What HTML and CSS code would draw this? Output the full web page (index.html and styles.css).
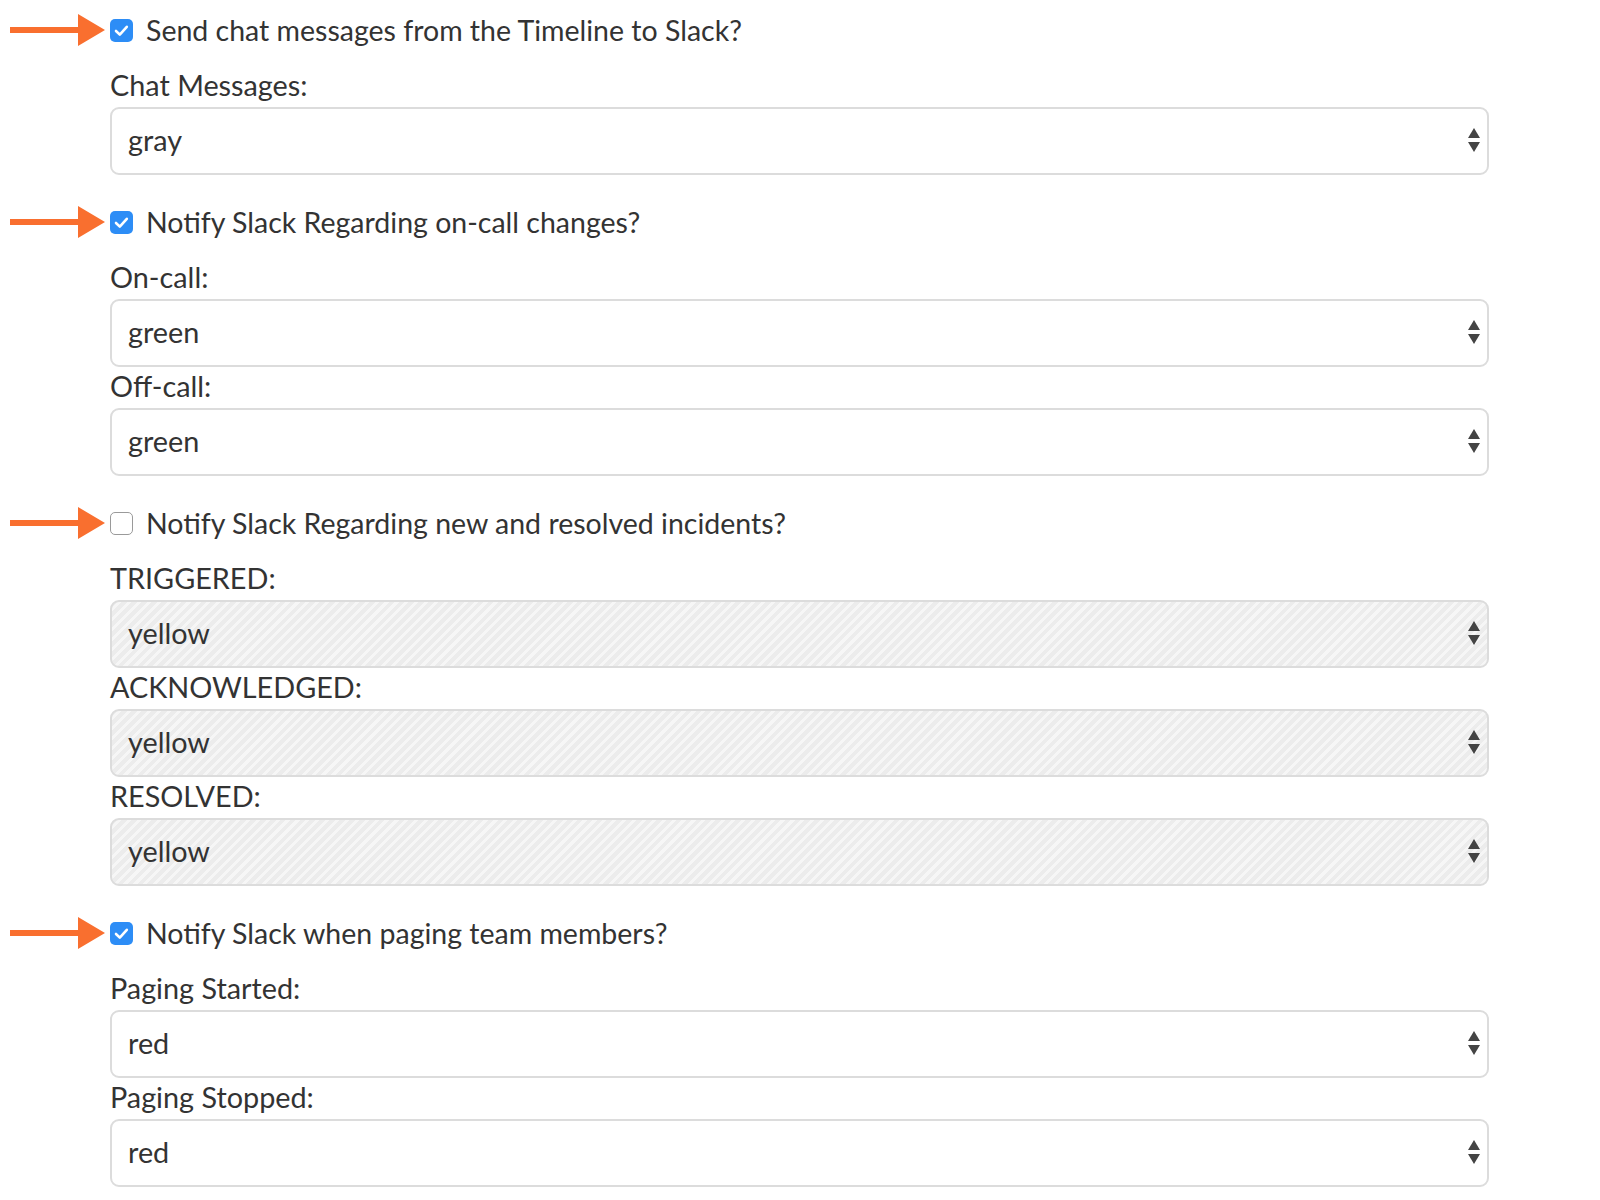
FILE: index.html
```html
<!DOCTYPE html>
<html>
<head>
<meta charset="utf-8">
<link rel="stylesheet" href="styles.css">
</head>
<body>
<div class="page">

  <section class="group">
    <div class="toggle-row">
      <svg class="pointer" width="100" height="40" viewBox="0 0 100 40"><rect x="0" y="17" width="70" height="6" fill="#f96f2f"/><polygon points="68,4 95,20 68,36" fill="#f96f2f"/></svg>
      <span class="box checked"><svg width="23" height="23" viewBox="0 0 23 23"><path d="M6 12 L9.8 15.6 L16.8 7.8" fill="none" stroke="#fff" stroke-width="2.6" stroke-linecap="round" stroke-linejoin="round"/></svg></span>
      <span class="toggle-text">Send chat messages from the Timeline to Slack?</span>
    </div>
    <div class="fields">
      <div class="field-label">Chat Messages:</div>
      <div class="select"><span>gray</span><svg class="caret" width="14" height="26" viewBox="0 0 14 26"><polygon points="7,0 13,10 1,10" /><polygon points="1,14 13,14 7,24"/></svg></div>
    </div>
  </section>

  <section class="group">
    <div class="toggle-row">
      <svg class="pointer" width="100" height="40" viewBox="0 0 100 40"><rect x="0" y="17" width="70" height="6" fill="#f96f2f"/><polygon points="68,4 95,20 68,36" fill="#f96f2f"/></svg>
      <span class="box checked"><svg width="23" height="23" viewBox="0 0 23 23"><path d="M6 12 L9.8 15.6 L16.8 7.8" fill="none" stroke="#fff" stroke-width="2.6" stroke-linecap="round" stroke-linejoin="round"/></svg></span>
      <span class="toggle-text">Notify Slack Regarding on-call changes?</span>
    </div>
    <div class="fields">
      <div class="field-label">On-call:</div>
      <div class="select"><span>green</span><svg class="caret" width="14" height="26" viewBox="0 0 14 26"><polygon points="7,0 13,10 1,10" /><polygon points="1,14 13,14 7,24"/></svg></div>
      <div class="field-label">Off-call:</div>
      <div class="select"><span>green</span><svg class="caret" width="14" height="26" viewBox="0 0 14 26"><polygon points="7,0 13,10 1,10" /><polygon points="1,14 13,14 7,24"/></svg></div>
    </div>
  </section>

  <section class="group">
    <div class="toggle-row">
      <svg class="pointer" width="100" height="40" viewBox="0 0 100 40"><rect x="0" y="17" width="70" height="6" fill="#f96f2f"/><polygon points="68,4 95,20 68,36" fill="#f96f2f"/></svg>
      <span class="box"></span>
      <span class="toggle-text">Notify Slack Regarding new and resolved incidents?</span>
    </div>
    <div class="fields">
      <div class="field-label">TRIGGERED:</div>
      <div class="select disabled"><span>yellow</span><svg class="caret" width="14" height="26" viewBox="0 0 14 26"><polygon points="7,0 13,10 1,10" /><polygon points="1,14 13,14 7,24"/></svg></div>
      <div class="field-label">ACKNOWLEDGED:</div>
      <div class="select disabled"><span>yellow</span><svg class="caret" width="14" height="26" viewBox="0 0 14 26"><polygon points="7,0 13,10 1,10" /><polygon points="1,14 13,14 7,24"/></svg></div>
      <div class="field-label">RESOLVED:</div>
      <div class="select disabled"><span>yellow</span><svg class="caret" width="14" height="26" viewBox="0 0 14 26"><polygon points="7,0 13,10 1,10" /><polygon points="1,14 13,14 7,24"/></svg></div>
    </div>
  </section>

  <section class="group">
    <div class="toggle-row">
      <svg class="pointer" width="100" height="40" viewBox="0 0 100 40"><rect x="0" y="17" width="70" height="6" fill="#f96f2f"/><polygon points="68,4 95,20 68,36" fill="#f96f2f"/></svg>
      <span class="box checked"><svg width="23" height="23" viewBox="0 0 23 23"><path d="M6 12 L9.8 15.6 L16.8 7.8" fill="none" stroke="#fff" stroke-width="2.6" stroke-linecap="round" stroke-linejoin="round"/></svg></span>
      <span class="toggle-text">Notify Slack when paging team members?</span>
    </div>
    <div class="fields">
      <div class="field-label">Paging Started:</div>
      <div class="select"><span>red</span><svg class="caret" width="14" height="26" viewBox="0 0 14 26"><polygon points="7,0 13,10 1,10" /><polygon points="1,14 13,14 7,24"/></svg></div>
      <div class="field-label">Paging Stopped:</div>
      <div class="select"><span>red</span><svg class="caret" width="14" height="26" viewBox="0 0 14 26"><polygon points="7,0 13,10 1,10" /><polygon points="1,14 13,14 7,24"/></svg></div>
    </div>
  </section>

</div>
</body>
</html>
```

FILE: styles.css
```css
html, body {
  margin: 0;
  padding: 0;
  background: #ffffff;
}

body {
  font-family: Lato, "Open Sans", "Liberation Sans", sans-serif;
  font-size: 28.8px;
  color: #333333;
}

.page {
  padding: 10px 0 0 10px;
}

.group {
  margin-bottom: 27px;
}

.toggle-row {
  display: flex;
  align-items: center;
  height: 40px;
}

.pointer {
  display: block;
  flex: none;
}

.box {
  flex: none;
  width: 23px;
  height: 23px;
  box-sizing: border-box;
  border: 1.5px solid #9a9a9a;
  border-radius: 5px;
  background: #fff;
  display: flex;
}

.box.checked {
  border: none;
  background: #2d8df6;
}

.toggle-text {
  margin-left: 13px;
  line-height: 40px;
  font-size: 28.5px;
}

.fields {
  margin-left: 100px;
  margin-top: 16px;
  width: 1379px;
}

.field-label {
  height: 41px;
  line-height: 38px;
}

.select {
  height: 68px;
  box-sizing: border-box;
  border: 2px solid #dcdcdc;
  border-radius: 9px;
  background: #ffffff;
  display: flex;
  align-items: center;
  justify-content: space-between;
  padding: 0 6px 2px 16px;
}

.select.disabled {
  background: repeating-linear-gradient(135deg, #ececec 0px, #ececec 4px, #f6f6f6 4px, #f6f6f6 7px);
}

.caret {
  fill: #444444;
  margin-top: 2px;
}
```
